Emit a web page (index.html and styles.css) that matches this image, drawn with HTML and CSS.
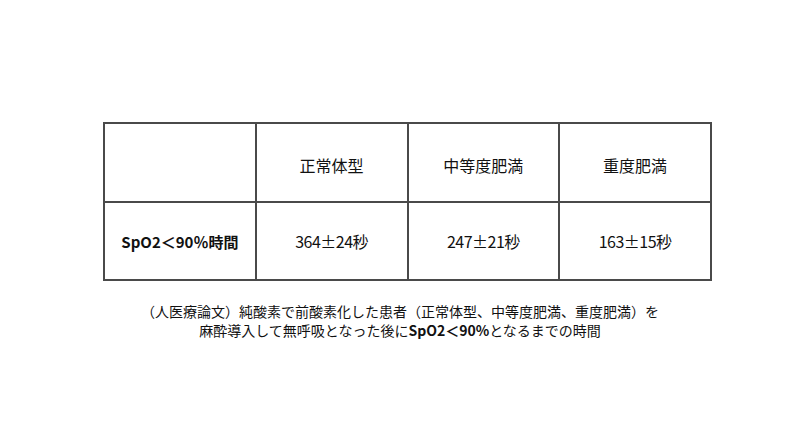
FILE: index.html
```html
<!DOCTYPE html>
<html lang="ja">
<head>
<meta charset="utf-8">
<link rel="stylesheet" href="styles.css">
</head>
<body>
<div class="page">
  <table class="grid">
    <tr class="head">
      <td></td>
      <td>正常体型</td>
      <td>中等度肥満</td>
      <td>重度肥満</td>
    </tr>
    <tr class="data">
      <td class="label">SpO2＜90％時間</td>
      <td>364±24秒</td>
      <td>247±21秒</td>
      <td>163±15秒</td>
    </tr>
  </table>
  <div class="caption">
    <p>（人医療論文）純酸素で前酸素化した患者（正常体型、中等度肥満、重度肥満）を</p>
    <p>麻酔導入して無呼吸となった後に<b>SpO2＜90%</b>となるまでの時間</p>
  </div>
</div>
</body>
</html>
```
FILE: styles.css
```css
html, body {
  margin: 0;
  background: #fff;
}
.page {
  width: 800px;
  height: 436px;
  padding-top: 122px;
  box-sizing: border-box;
  font-family: "Noto Sans CJK JP", sans-serif;
  color: #111;
}
.grid {
  margin-left: 103px;
  width: 609px;
  border-collapse: collapse;
  table-layout: fixed;
}
.grid td {
  border: 2px solid #4a4a4a;
  text-align: center;
  vertical-align: middle;
  padding: 0;
  font-size: 16px;
}
.head td {
  height: 73px;
  padding-top: 4px;
}
.data td {
  height: 76px;
  letter-spacing: -0.5px;
}
.data td.label {
  font-weight: bold;
  font-size: 15px;
  letter-spacing: 0;
}
.caption {
  margin-top: 21px;
  text-align: center;
  font-size: 14px;
  line-height: 19px;
}
.caption p {
  margin: 0;
}
```
